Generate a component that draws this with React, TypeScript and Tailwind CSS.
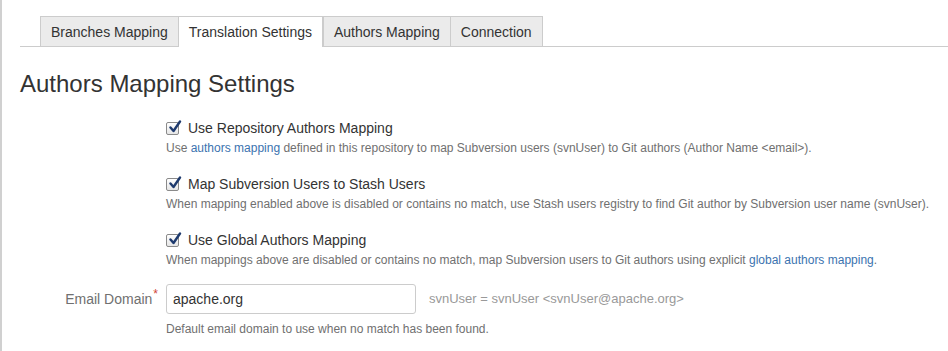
import React from "react"

const tabs = ["Branches Mapping", "Translation Settings", "Authors Mapping", "Connection"]

function Check() {
  return (
    <span className="relative inline-flex h-[13px] w-[13px] shrink-0 items-center justify-center rounded-[2px] border border-[#8a8a8a] bg-gradient-to-b from-white to-[#e6e6e6]">
      <svg viewBox="0 0 14 14" className="absolute left-[1px] top-[-3px] h-[14px] w-[14px]">
        <path d="M2.5 7.5 L5.5 11 L12 1.5" fill="none" stroke="#1e3a6e" strokeWidth="2.4" strokeLinecap="round" strokeLinejoin="round" />
      </svg>
    </span>
  )
}

function Option({ label, children }: { label: string; children: React.ReactNode }) {
  return (
    <div className="flex flex-col">
      <label className="flex h-[20px] items-center gap-[9px] text-[14px] text-[#333]">
        <Check />
        {label}
      </label>
      <p className="h-[20px] leading-[20px] text-[12px] text-[#707070]">{children}</p>
    </div>
  )
}

export default function App() {
  return (
    <div className="min-h-[351px] w-[948px] border-l-2 border-[#d0d0d0] bg-white font-['Liberation_Sans',Arial,sans-serif]">
      <div className="pl-[18px] pt-[16px]">
        <ul className="flex border-b border-[#cccccc] pl-[20px]">
          {tabs.map((t, i) => (
            <li
              key={t}
              className={
                i === 1
                  ? "-mb-px h-[31px] border-x border-t border-[#cccccc] bg-white px-[10px] text-[14px] leading-[30px] text-[#333]"
                  : "h-[30px] border-l border-t border-[#cccccc] bg-[#ebebeb] px-[10px] text-[14px] leading-[30px] text-[#333] last:border-r"
              }
            >
              {t}
            </li>
          ))}
        </ul>
        <h2 className="mt-[22px] text-[24px] leading-[30px] text-[#333]">Authors Mapping Settings</h2>
        <div className="ml-[146px] mt-[19px] flex flex-col gap-[16px]">
          <Option label="Use Repository Authors Mapping">
            Use <a className="text-[#3b73af]">authors mapping</a> defined in this repository to map Subversion users (svnUser) to Git authors (Author Name &lt;email&gt;).
          </Option>
          <Option label="Map Subversion Users to Stash Users">
            When mapping enabled above is disabled or contains no match, use Stash users registry to find Git author by Subversion user name (svnUser).
          </Option>
          <Option label="Use Global Authors Mapping">
            When mappings above are disabled or contains no match, map Subversion users to Git authors using explicit <a className="text-[#3b73af]">global authors mapping</a>.
          </Option>
        </div>
        <div className="mt-[14px] flex items-center">
          <div className="w-[146px] pr-[8px] text-right text-[14px] text-[#707070]">
            Email Domain<span className="relative top-[-6px] ml-[1px] text-[12px] text-[#d04437]">*</span>
          </div>
          <input
            defaultValue="apache.org"
            className="h-[30px] w-[250px] rounded-[3px] border border-[#cccccc] px-[6px] text-[14px] text-[#333] outline-none"
          />
          <span className="ml-[13px] text-[13px] text-[#999]">svnUser = svnUser &lt;svnUser@apache.org&gt;</span>
        </div>
        <p className="ml-[146px] mt-[6px] text-[12px] leading-[18px] text-[#707070]">Default email domain to use when no match has been found.</p>
      </div>
    </div>
  )
}
